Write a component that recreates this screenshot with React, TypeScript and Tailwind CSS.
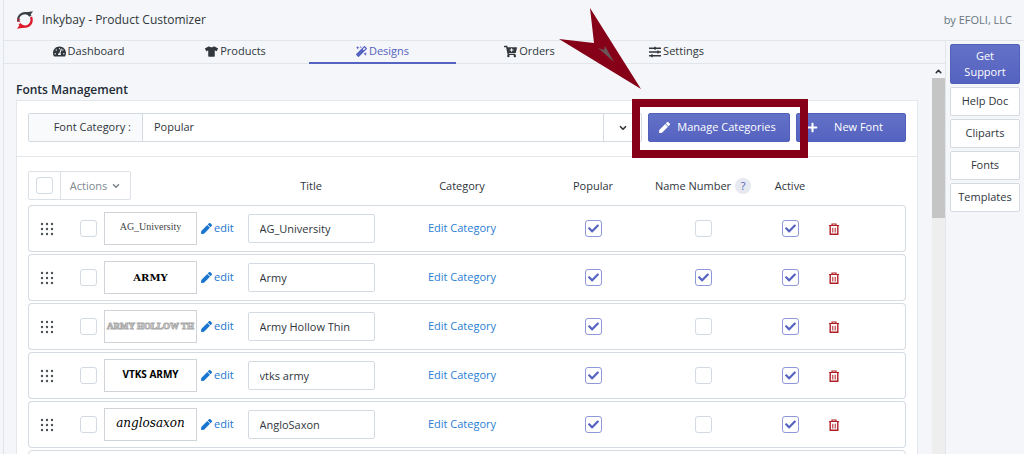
import { useState } from "react";
import type { ReactNode } from "react";
import { FaCheck, FaMagic, FaPen, FaPlus, FaSlidersH, FaTachometerAlt, FaTshirt, FaCartPlus } from "react-icons/fa";
import { ChevronDown, ChevronUp } from "lucide-react";

type FontRow = {
  title: string;
  sample: string;
  sampleClass: string;
  popular: boolean;
  nameNumber: boolean;
  active: boolean;
};

const tabs = [
  { label: "Dashboard", icon: <FaTachometerAlt size={13} /> },
  { label: "Products", icon: <FaTshirt size={13} /> },
  { label: "Designs", icon: <FaMagic size={11} />, current: true },
  { label: "Orders", icon: <FaCartPlus size={13} /> },
  { label: "Settings", icon: <FaSlidersH size={12} /> },
];

const fonts: FontRow[] = [
  {
    title: "AG_University",
    sample: "AG_University",
    sampleClass: "pb-1 font-['Liberation_Serif',serif] text-[10px] text-[#444]",
    popular: true,
    nameNumber: false,
    active: true,
  },
  {
    title: "Army",
    sample: "ARMY",
    sampleClass: "font-['DejaVu_Serif',serif] text-[10px] font-black text-black",
    popular: true,
    nameNumber: true,
    active: true,
  },
  {
    title: "Army Hollow Thin",
    sample: "ARMY HOLLOW TH",
    sampleClass: "font-['Liberation_Serif',serif] text-[9px] font-bold text-white [-webkit-text-stroke:1px_#aaa]",
    popular: true,
    nameNumber: false,
    active: true,
  },
  {
    title: "vtks army",
    sample: "VTKS ARMY",
    sampleClass: "pb-0.5 font-['Open_Sans',sans-serif] text-[10px] font-bold text-black",
    popular: true,
    nameNumber: false,
    active: true,
  },
  {
    title: "AngloSaxon",
    sample: "anglosaxon",
    sampleClass: "pb-1 font-['DejaVu_Serif',serif] text-[12px] italic text-black",
    popular: true,
    nameNumber: false,
    active: true,
  },
];

const sideLinks = ["Help Doc", "Cliparts", "Fonts", "Templates"];

function Logo() {
  return (
    <svg viewBox="0 0 18 18" className="size-[18px]" fill="none" aria-hidden="true">
      <path d="M2.400 10.500A6.700 6.700 0 0 1 14.500 5.200" stroke="#3a3f45" strokeWidth="2.400" />
      <path d="M9 1.500L17 .300L14 4.500Z" fill="#3a3f45" />
      <path d="M15 6A6.700 6.700 0 0 1 3.500 12.800" stroke="#dd1a2b" strokeWidth="2.400" />
      <path d="M9 16.500L1 17.700L4 13.500Z" fill="#dd1a2b" />
      <path d="M1 10L4.200 10.800M1 8L4.200 8.800" stroke="#dd1a2b" strokeWidth=".800" />
    </svg>
  );
}

function DragHandle() {
  return (
    <svg viewBox="0 0 14 14" className="size-[14px]" fill="#4b5157" aria-hidden="true">
      {[2, 7, 12].map((y) => [2, 7, 12].map((x) => <circle key={`${x}-${y}`} cx={x} cy={y} r="1.200" />))}
    </svg>
  );
}

function TrashIcon() {
  return (
    <svg viewBox="0 0 10 12" className="h-3 w-[10px]" fill="none" stroke="#b01e24" aria-hidden="true">
      <path d="M0 2.500h10M3 2.500V1h4v1.500" strokeWidth="1.200" />
      <path d="M1.200 3v8.300h7.600V3" strokeWidth="1.400" />
      <path d="M3.800 4.800v4.700M6.200 4.800v4.700" />
    </svg>
  );
}

function Checkbox({ label, defaultChecked = false }: { label: string; defaultChecked?: boolean }) {
  const [checked, setChecked] = useState(defaultChecked);

  return (
    <span className="inline-grid size-[17px] align-middle">
      <input
        type="checkbox"
        aria-label={label}
        checked={checked}
        onChange={(e) => setChecked(e.target.checked)}
        className="col-start-1 row-start-1 size-[17px] appearance-none rounded-[3px] border border-[#d3dae1] bg-white checked:border-[#8e97d8]"
      />
      {checked && (
        <FaCheck
          size={11}
          className="pointer-events-none col-start-1 row-start-1 place-self-center text-[#5563c1]"
        />
      )}
    </span>
  );
}

function PrimaryButton({ icon, children, className }: { icon: ReactNode; children: ReactNode; className: string }) {
  return (
    <button
      className={`flex h-[29px] items-center rounded-xs border border-[#5260ba] bg-linear-to-b from-[#6371c7] to-[#5563c1] px-2.5 whitespace-nowrap text-white ${className}`}
    >
      {icon}
      <span className="flex-1 pl-1 text-center">{children}</span>
    </button>
  );
}

function Callout() {
  return (
    <>
      <div className="pointer-events-none absolute -top-[14px] -right-[18px] -bottom-4 -left-4 z-10 border-8 border-[#860018]" />
      <svg
        viewBox="0 0 82 82"
        className="pointer-events-none absolute -top-[105px] -left-[89px] z-10 size-[82px]"
        aria-hidden="true"
      >
        <path d="M31 0L82 81L0 31L35 35Z" fill="#860018" />
        <path d="M39 40L45 42L46 38L55 54Z" fill="#6b5558" />
      </svg>
    </>
  );
}

function FontTableRow({ font }: { font: FontRow }) {
  const cell = "h-[47px] border-y border-[#d5dbe2] bg-white p-0 text-center";

  return (
    <tr>
      <td className={`${cell} rounded-l-sm border-l`}>
        <div className="flex items-center">
          <button aria-label={`Move ${font.title}`} className="ml-[11px]">
            <DragHandle />
          </button>
          <span className="ml-[26px] flex">
            <Checkbox label={`Select ${font.title}`} />
          </span>
          <span className="ml-[7px] flex h-[33px] w-[93px] items-center justify-center overflow-hidden border border-[#d0d4d8]">
            <span className={`whitespace-nowrap ${font.sampleClass}`}>{font.sample}</span>
          </span>
          <a href="#edit" className="ml-1 flex items-center gap-0.5 text-[#1a75cf]">
            <FaPen size={11} />
            edit
          </a>
        </div>
      </td>
      <td className={cell}>
        <input
          aria-label="Title"
          defaultValue={font.title}
          className="h-[29px] w-[127px] rounded-xs border border-[#d3dae1] bg-white px-[11px] text-[#30363c]"
        />
      </td>
      <td className={cell}>
        <a href="#category" className="text-[#2a7ed3]">
          Edit Category
        </a>
      </td>
      <td className={cell}>
        <Checkbox label="Popular" defaultChecked={font.popular} />
      </td>
      <td className={cell}>
        <Checkbox label="Name Number" defaultChecked={font.nameNumber} />
      </td>
      <td className={cell}>
        <Checkbox label="Active" defaultChecked={font.active} />
      </td>
      <td className={`${cell} rounded-r-sm border-r`}>
        <button aria-label={`Delete ${font.title}`} className="ml-[11px] flex">
          <TrashIcon />
        </button>
      </td>
    </tr>
  );
}

export default function App() {
  return (
    <div className="flex h-screen overflow-hidden bg-[#f4f6f9] font-['Open_Sans',sans-serif] text-[11px] text-[#30363c]">
      <div className="w-1 shrink-0 border-r border-[#dfe4ea]" />
      <div className="flex min-w-0 flex-1 flex-col">
        <header className="flex h-[41px] shrink-0 items-center gap-2 border-b border-[#e1e6eb] pr-3 pl-3">
          <Logo />
          <h1 className="text-xs">Inkybay - Product Customizer</h1>
          <span className="ml-auto text-[#687480]">by EFOLI, LLC</span>
        </header>

        <div className="flex min-h-0 flex-1">
          <main className="flex min-w-0 flex-1 flex-col">
            <nav className="flex h-[23px] shrink-0 border-b border-[#e1e6eb] pl-[11px]">
              {tabs.map((tab) => (
                <a
                  key={tab.label}
                  href={`#${tab.label.toLowerCase()}`}
                  className={`flex h-[23px] w-[147px] items-center justify-center gap-0.5 border-b-2 ${
                    tab.current ? "border-[#5563c1] text-[#5563c1]" : "border-transparent"
                  }`}
                >
                  {tab.icon}
                  {tab.label}
                </a>
              ))}
            </nav>

            <div className="flex min-h-0 flex-1">
              <section className="min-w-0 flex-1 pt-4 pr-[14px] pl-3">
                <h2 className="mb-px text-xs leading-[19px] font-semibold text-[#212b36]">Fonts Management</h2>
                <div className="border border-[#e4e8ec] bg-white">
                  <div className="flex gap-[6px] border-b border-[#e4e8ec] px-[11px] pt-3 pb-[14px]">
                    <div className="flex h-[29px] flex-1 rounded-xs border border-[#d3dae1]">
                      <label
                        htmlFor="category"
                        className="flex w-[114px] items-center justify-end border-r border-[#d3dae1] bg-[#f9fafb] pr-[11px]"
                      >
                        Font Category :
                      </label>
                      <div className="grid flex-1">
                        <select id="category" className="col-start-1 row-start-1 appearance-none px-[11px]">
                          <option>Popular</option>
                        </select>
                        <span className="pointer-events-none col-start-1 row-start-1 flex w-[38px] items-center justify-center justify-self-end border-l border-[#d3dae1]">
                          <ChevronDown size={10} strokeWidth={4} />
                        </span>
                      </div>
                    </div>
                    <div className="relative">
                      <PrimaryButton icon={<FaPen size={11} />} className="w-[142px]">
                        Manage Categories
                      </PrimaryButton>
                      <Callout />
                    </div>
                    <PrimaryButton icon={<FaPlus size={11} />} className="w-[110px]">
                      New Font
                    </PrimaryButton>
                  </div>

                  <div className="px-[11px] pt-3">
                    <table className="w-full table-fixed border-separate border-spacing-x-0 border-spacing-y-0.5">
                      <colgroup>
                        <col className="w-[212px]" />
                        <col className="w-[142px]" />
                        <col className="w-[160px]" />
                        <col className="w-[102px]" />
                        <col className="w-[118px]" />
                        <col className="w-[56px]" />
                        <col />
                      </colgroup>
                      <thead>
                        <tr className="h-8 align-top leading-[29px] [&>th]:p-0 [&>th]:font-normal">
                          <th>
                            <div className="flex h-[29px] w-[103px] items-center rounded-xs border border-[#dce1e7] text-[#808890]">
                              <span className="flex h-full w-8 items-center justify-center border-r border-[#dce1e7]">
                                <Checkbox label="Select all" />
                              </span>
                              <button className="flex flex-1 items-center justify-center gap-1">
                                Actions
                                <ChevronDown size={10} strokeWidth={4} />
                              </button>
                            </div>
                          </th>
                          <th>Title</th>
                          <th>Category</th>
                          <th>Popular</th>
                          <th>
                            <div className="flex items-center justify-center gap-1 whitespace-nowrap">
                              Name Number
                              <span className="flex size-4 items-center justify-center rounded-full bg-[#e6e9f0] text-[#5563c1]">
                                ?
                              </span>
                            </div>
                          </th>
                          <th>Active</th>
                          <th />
                        </tr>
                      </thead>
                      <tbody>
                        {fonts.map((font) => (
                          <FontTableRow key={font.title} font={font} />
                        ))}
                        <tr>
                          <td colSpan={7} className="h-[47px] rounded-sm border border-[#d5dbe2]" />
                        </tr>
                      </tbody>
                    </table>
                  </div>
                </div>
              </section>

              <div className="flex w-[13px] shrink-0 flex-col bg-[#eeeeef]">
                <span className="flex h-[14px] items-center justify-center bg-[#f4f6f9]">
                  <ChevronUp size={9} strokeWidth={4} />
                </span>
                <span className="h-[140px] bg-[#c5c5c6]" />
              </div>
            </div>
          </main>

          <aside className="flex w-[79px] shrink-0 flex-col gap-[3px] border-l border-[#e1e6eb] px-1 pt-[3px]">
            <button className="h-10 rounded-xs border border-[#5260ba] bg-linear-to-b from-[#6371c7] to-[#5563c1] px-3 leading-4 text-white">
              Get Support
            </button>
            {sideLinks.map((label) => (
              <button key={label} className="h-[29px] rounded-xs border border-[#d3dae1] bg-white">
                {label}
              </button>
            ))}
          </aside>
        </div>
      </div>
    </div>
  );
}
